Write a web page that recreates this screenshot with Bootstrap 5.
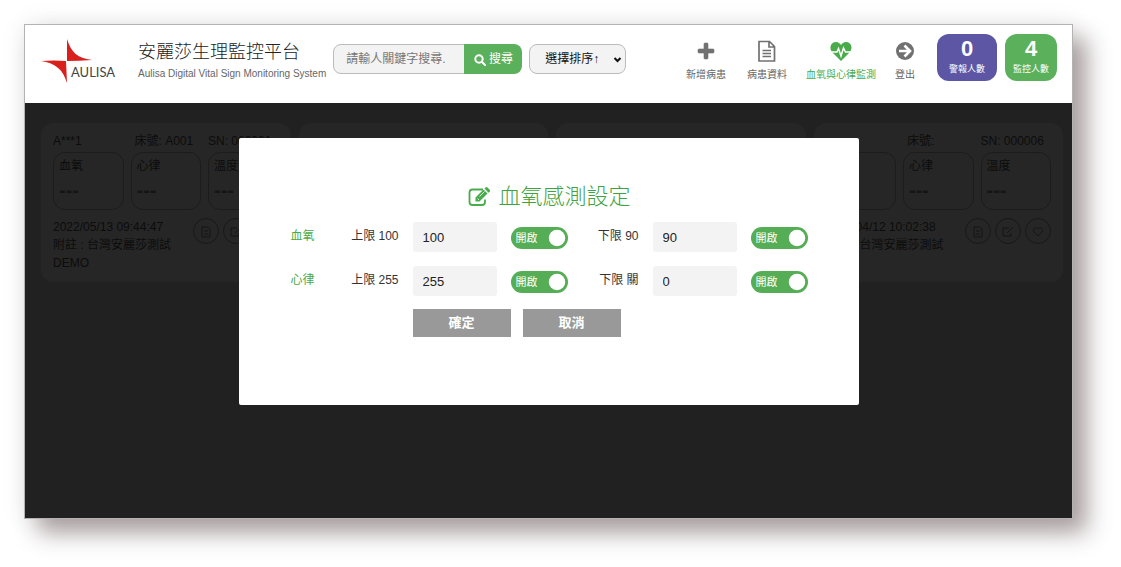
<!DOCTYPE html>
<html lang="zh-Hant">
<head>
<meta charset="utf-8">
<meta name="viewport" content="width=device-width, initial-scale=1">
<title>安麗莎生理監控平台</title>
<link href="https://cdn.jsdelivr.net/npm/bootstrap@5.3.0/dist/css/bootstrap.min.css" rel="stylesheet">
<style>
  body { font-family: "Liberation Sans", "Noto Sans CJK TC", sans-serif; font-size: 12px; color: #333; background: #fff; padding: 24px 48px 48px 24px; }
  .app-window { border: 1px solid #b4b2b2; background: #212121; box-shadow: 14px 14px 22px rgba(60, 35, 35, .42), 0 0 24px rgba(0, 0, 0, .08); }
  .app-header { background: #fff; min-height: 78px; padding: 9px 15px 0 16px; }
  .brand-logo { width: 76px; height: 46px; margin: 5px 21px 0 0; }
  .brand-name { font-size: 18px; line-height: 24px; color: #222; margin-top: 6px; font-weight: 300; white-space: nowrap; }
  .brand-sub { font-size: 10px; line-height: 16px; color: #666; margin-top: 2px; white-space: nowrap; }
  .search-bar { width: 189px; height: 30px; margin: 10px 7px 0; }
  .search-bar .form-control { font-size: 12px; padding: 0 12px; background: #f3f3f3; border-color: #bbb; border-radius: 8px; color: #333; }
  .search-bar .form-control::placeholder { color: #777; }
  .search-bar .btn { width: 58px; font-size: 12px; padding: 0; background: #5bb05b; color: #fff; border: 0; border-radius: 8px; }
  .sort-select { width: 97px; height: 30px; margin-top: 10px; font-size: 12px; padding: 0 20px 0 15px; background-color: #f3f3f3; border-color: #bbb; border-radius: 8px; color: #111; background-position: right 3px center; background-size: 9px 9px;
    background-image: url("data:image/svg+xml,%3csvg xmlns='http://www.w3.org/2000/svg' viewBox='0 0 9 9'%3e%3cpath d='M1.5 3l3 3 3-3' fill='none' stroke='%23111' stroke-width='2'/%3e%3c/svg%3e"); }
  .main-nav { gap: 17px; margin: 5px 20px 0 0; font-size: 10px; }
  .main-nav a { color: #666; line-height: 16px; gap: 4px; white-space: nowrap; min-width: 44px; }
  .main-nav a:last-child { min-width: 20px; }
  .main-nav a.active { color: #4aab4a; }
  .main-nav svg { width: 24px; height: 24px; }
  .count-tile { height: 47px; border-radius: 12px; color: #fff; font-size: 9px; line-height: 14px; }
  .count-tile strong { font-size: 22px; line-height: 26px; margin-top: 2px; font-weight: 700; }
  .count-alert { width: 60px; background: #5c56a5; }
  .count-watch { width: 52px; background: #5bb05b; }
  .board { min-height: 415px; padding: 20px 9px 16px 16px; }
  .patients { display: grid; grid-template-columns: repeat(4, 1fr); gap: 8px; }
  .patient { background: #262626; border-radius: 12px; min-height: 159px; padding: 9px 12px; color: #0c0c0c; line-height: 18px; }
  .vitals { display: grid; grid-template-columns: repeat(3, 1fr); gap: 0 7px; white-space: nowrap; }
  .vital { border: 1px solid #1c1c1c; border-radius: 12px; height: 58px; padding: 4px 5px; margin-top: 2px; }
  .vital b { display: block; font-size: 20px; line-height: 18px; margin-top: 6px; color: #151515; }
  .tool-btn { width: 26px; height: 26px; border: 1px solid #181818; border-radius: 50%; background: none; padding: 0; color: #151515; }
  .dialog-layer { position: absolute; inset: 35px 0 auto 0; }
  .dialog-box { width: 620px; max-width: 100%; min-height: 267px; background: #fff; border-radius: 2px; padding: 43px 50px 20px 52px; }
  .dialog-title { font-size: 22px; line-height: 32px; color: #3fa33f; font-weight: 300; gap: 7px; margin: 0 0 9px; }
  .limits { display: grid; grid-template-columns: 32px 62px 84px 57px 57px 84px 57px; column-gap: 14px; row-gap: 14px; }
  .limits > span, .limits > label { line-height: 20px; padding-top: 4px; white-space: nowrap; }
  .limits > label { text-align: right; }
  .limits > span { color: #4aab4a; }
  .limits .form-control { height: 30px; background: #f3f3f3; border: 0; border-radius: 3px; padding: 0 10px; font-size: 13px; color: #222; }
  .toggle { position: relative; width: 57px; height: 22px; min-height: 0; margin: 5px 0 0; padding: 0; }
  .toggle .form-check-input { display: block; width: 57px; height: 22px; margin: 0; border: 0; }
  .toggle .form-check-input:checked { background-color: #55ad55; }
  .toggle label { position: absolute; left: 5px; top: 0; line-height: 22px; font-size: 11px; color: #fff; }
  .dialog-actions { gap: 12px; margin: 13px 0 0 122px; }
  .dialog-actions .btn { width: 98px; height: 28px; border: 0; border-radius: 0; background: #999; color: #fff; font-size: 13px; font-weight: 700; padding: 0; }
</style>
</head>
<body>
<div class="app-window">
  <header class="app-header d-flex align-items-start">
    <svg class="brand-logo flex-shrink-0" viewBox="0 0 76 46" role="img" aria-label="AULISA">
      <path d="M26 0C30 13 36 19 51 21Q38 22 26 22Z" fill="#d9201c"/>
      <path d="M0 22Q13 21 25 22L26 44C22 31 15 24 0 22Z" fill="#d9201c"/>
      <text x="30" y="38" font-family="Lato, sans-serif" font-size="13" fill="#444">AULISA</text>
    </svg>
    <div>
      <div class="brand-name">安麗莎生理監控平台</div>
      <div class="brand-sub">Aulisa Digital Vital Sign Monitoring System</div>
    </div>
    <form class="search-bar input-group flex-nowrap">
      <input class="form-control" type="text" placeholder="請輸人關鍵字搜尋." aria-label="搜尋">
      <button class="btn" type="button"><svg width="12" height="12" viewBox="0 0 12 12" fill="none" stroke="#fff" stroke-width="2" stroke-linecap="round"><circle cx="5" cy="5" r="3.7"/><path d="M8 8l3 3"/></svg> 搜尋</button>
    </form>
    <select class="form-select sort-select" aria-label="排序"><option>選擇排序↑</option></select>
    <nav class="main-nav d-flex ms-auto">
      <a class="d-flex flex-column align-items-center text-decoration-none" href="#"><svg viewBox="0 0 24 24" fill="#717171"><path d="M11 4h2q1 0 1 1v5h5q1 0 1 1v2q0 1-1 1h-5v5q0 1-1 1h-2q-1 0-1-1v-5H5q-1 0-1-1v-2q0-1 1-1h5V5q0-1 1-1z" stroke="#717171" stroke-width=".6"/></svg>新增病患</a>
      <a class="d-flex flex-column align-items-center text-decoration-none" href="#"><svg viewBox="0 0 24 24" fill="none" stroke="#717171" stroke-width="1.700"><path d="M4 2.500h10.500l5 5V22H4zM14 2.500V8h5.500M7.500 11.500h8.500M7.500 14.500h8.500M7.500 17.500h8.500"/></svg>病患資料</a>
      <a class="active d-flex flex-column align-items-center text-decoration-none" href="#"><svg viewBox="0 0 24 24"><path d="M12 22L3.500 13.500C0 10 1 3 7 3c2.500 0 4 1.500 5 3 1-1.500 2.500-3 5-3 6 0 7 7 3.500 10.500z" fill="#4aab4a"/><path d="M1 13h7l1.500-3.500L12 17l2.500-8 2 4H23" fill="none" stroke="#fff" stroke-width="1.500"/></svg>血氧與心律監測</a>
      <a class="d-flex flex-column align-items-center text-decoration-none" href="#"><svg viewBox="0 0 24 24"><circle cx="12" cy="12" r="9" fill="#717171"/><path d="M6 12h10M11.500 6.500L17 12l-5.500 5.500" fill="none" stroke="#fff" stroke-width="2.600"/></svg>登出</a>
    </nav>
    <div class="count-tile count-alert d-flex flex-column align-items-center flex-shrink-0 me-2"><strong>0</strong>警報人數</div>
    <div class="count-tile count-watch d-flex flex-column align-items-center flex-shrink-0"><strong>4</strong>監控人數</div>
  </header>
  <main class="board position-relative">
    <div class="patients">
      <section class="patient">
        <div class="vitals">
          <span>A***1</span><span class="ps-1">床號: A001</span><span>SN: 000001</span>
          <div class="vital">血氧<b>---</b></div><div class="vital">心律<b>---</b></div><div class="vital">溫度<b>---</b></div>
        </div>
        <div class="d-flex justify-content-between pt-2">
          <div>2022/05/13 09:44:47<br>附註 : 台灣安麗莎測試<br>DEMO</div>
          <div class="d-flex gap-1">
            <button class="tool-btn" type="button" aria-label="病患資料"><svg width="12" height="12" viewBox="0 0 12 12" fill="none" stroke="currentColor"><path d="M2 1h6l2 2v8H2zM4 5h4M4 8h4"/></svg></button>
            <button class="tool-btn" type="button" aria-label="編輯"><svg width="12" height="12" viewBox="0 0 12 12" fill="none" stroke="currentColor"><path d="M7 2H1v8h8V7M5 7l6-6"/></svg></button>
            <button class="tool-btn" type="button" aria-label="監測"><svg width="12" height="12" viewBox="0 0 12 12" fill="none" stroke="currentColor"><path d="M6 10L2 6C0 3 4 0 6 3c2-3 6 0 4 3z"/></svg></button>
          </div>
        </div>
      </section>
      <section class="patient"></section>
      <section class="patient"></section>
      <section class="patient">
        <div class="vitals">
          <span></span><span class="ps-1">床號:</span><span>SN: 000006</span>
          <div class="vital"></div><div class="vital">心律<b>---</b></div><div class="vital">溫度<b>---</b></div>
        </div>
        <div class="d-flex justify-content-between pt-2">
          <div>2022/04/12 10:02:38<br>附註 : 台灣安麗莎測試</div>
          <div class="d-flex gap-1">
            <button class="tool-btn" type="button" aria-label="病患資料"><svg width="12" height="12" viewBox="0 0 12 12" fill="none" stroke="currentColor"><path d="M2 1h6l2 2v8H2zM4 5h4M4 8h4"/></svg></button>
            <button class="tool-btn" type="button" aria-label="編輯"><svg width="12" height="12" viewBox="0 0 12 12" fill="none" stroke="currentColor"><path d="M7 2H1v8h8V7M5 7l6-6"/></svg></button>
            <button class="tool-btn" type="button" aria-label="監測"><svg width="12" height="12" viewBox="0 0 12 12" fill="none" stroke="currentColor"><path d="M6 10L2 6C0 3 4 0 6 3c2-3 6 0 4 3z"/></svg></button>
          </div>
        </div>
      </section>
    </div>
    <div class="dialog-layer d-flex justify-content-center">
      <form class="dialog-box" role="dialog" aria-labelledby="dlg">
        <h1 class="dialog-title d-flex justify-content-center align-items-center" id="dlg">
          <svg width="23" height="20" viewBox="0 0 23 20"><path d="M15 2.500H4.500Q1.500 2.500 1.500 5.500V15q0 3 3 3H14q3 0 3-3v-2.500" fill="none" stroke="#4aab4a" stroke-width="1.800"/><path d="M7.500 14.500V10.500L15.500 2.500l4 4-8 8zM16.500 1.500L17.500.500q1-.800 2 0l2.200 2.200q.800 1 0 2l-1.200 1z" fill="#4aab4a"/><path d="M9.500 11.500l1.500 1.500M11.500 9.500l5-5" stroke="#fff" stroke-width=".8"/></svg>
          血氧感測設定
        </h1>
        <div class="limits">
          <span>血氧</span>
          <label for="o2max">上限 100</label><input class="form-control" id="o2max" type="text" value="100">
          <div class="form-check form-switch toggle"><input class="form-check-input" type="checkbox" id="t1" checked><label for="t1">開啟</label></div>
          <label for="o2min">下限 90</label><input class="form-control" id="o2min" type="text" value="90">
          <div class="form-check form-switch toggle"><input class="form-check-input" type="checkbox" id="t2" checked><label for="t2">開啟</label></div>
          <span>心律</span>
          <label for="hrmax">上限 255</label><input class="form-control" id="hrmax" type="text" value="255">
          <div class="form-check form-switch toggle"><input class="form-check-input" type="checkbox" id="t3" checked><label for="t3">開啟</label></div>
          <label for="hrmin">下限 關</label><input class="form-control" id="hrmin" type="text" value="0">
          <div class="form-check form-switch toggle"><input class="form-check-input" type="checkbox" id="t4" checked><label for="t4">開啟</label></div>
        </div>
        <div class="dialog-actions d-flex">
          <button class="btn" type="button">確定</button>
          <button class="btn" type="button">取消</button>
        </div>
      </form>
    </div>
  </main>
</div>
<script src="https://cdn.jsdelivr.net/npm/bootstrap@5.3.0/dist/js/bootstrap.bundle.min.js"></script>
</body>
</html>
